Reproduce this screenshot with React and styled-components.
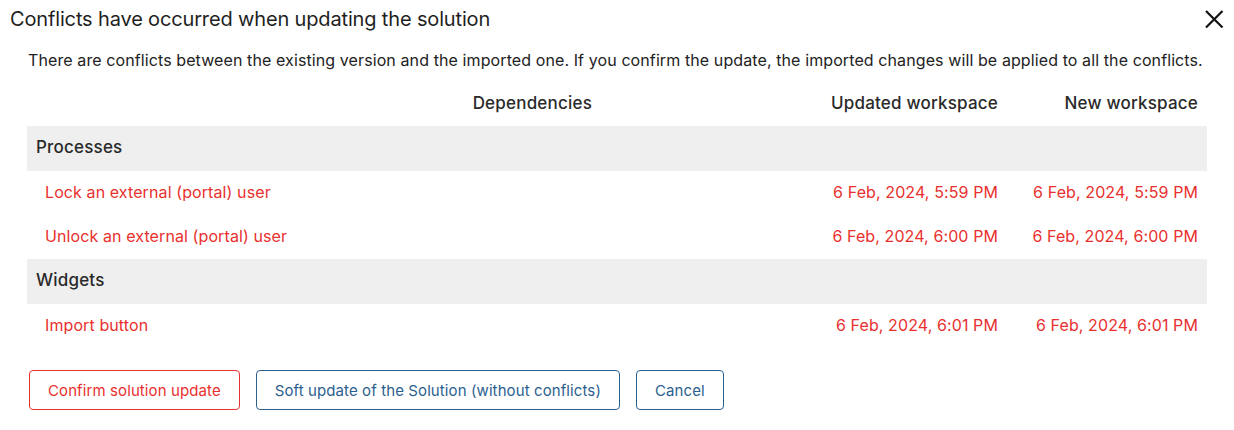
import React from 'react';
import styled, { createGlobalStyle } from 'styled-components';

const GlobalStyle = createGlobalStyle`
  body {
    margin: 0;
    background: #ffffff;
    font-family: 'Inter', 'Liberation Sans', sans-serif;
    color: #222222;
  }
`;

const Dialog = styled.div`
  width: 1234px;
  height: 430px;
  background: #fff;
`;

const Header = styled.div`
  height: 38px;
  display: flex;
  align-items: center;
  justify-content: space-between;
  padding: 0 10px;
`;

const Title = styled.div`
  font-size: 20px;
  font-weight: 400;
  color: #1f1f1f;
  letter-spacing: -0.15px;
`;

const CloseBtn = styled.button`
  border: none;
  background: none;
  padding: 0;
  width: 20px;
  height: 20px;
  display: flex;
  cursor: pointer;
`;

const Body = styled.div`
  padding: 10px 27px 0 27px;
`;

const Description = styled.p`
  margin: 0 0 8px 1px;
  font-size: 16px;
  line-height: 24px;
  letter-spacing: 0.1px;
  color: #222;
`;

const Table = styled.div`
  display: grid;
  grid-template-columns: 1fr 210px 200px;
`;

const HeadCell = styled.div`
  height: 46px;
  display: flex;
  align-items: center;
  justify-content: flex-end;
  padding-right: ${p => p.$pr || 9}px;
  font-size: 17px;
  font-weight: 500;
  letter-spacing: 0.2px;
  color: #2a2a2a;
`;

const Section = styled.div`
  grid-column: 1 / -1;
  height: 45px;
  box-sizing: border-box;
  display: flex;
  align-items: center;
  padding: 0 0 3px 9px;
  background: #efefef;
  font-size: 17px;
  font-weight: 500;
  letter-spacing: 0.2px;
  color: #2a2a2a;
`;

const Cell = styled.div`
  height: 44px;
  box-sizing: border-box;
  display: flex;
  align-items: center;
  justify-content: ${p => (p.$right ? 'flex-end' : 'flex-start')};
  padding: ${p => (p.$right ? '0 9px 3px 0' : '0 0 3px 18px')};
  font-size: 16px;
  letter-spacing: 0.1px;
  color: #e8302e;
  white-space: nowrap;
`;

const Actions = styled.div`
  display: flex;
  gap: 16px;
  margin-top: 22px;
  padding-left: 2px;
`;

const Button = styled.button`
  height: 40px;
  padding: 0 18px;
  border-radius: 4px;
  background: #fff;
  font-family: inherit;
  font-size: 15px;
  letter-spacing: 0.1px;
  border: 1px solid ${p => (p.$danger ? '#e8302e' : '#2c5f8f')};
  color: ${p => (p.$danger ? '#e8302e' : '#2c5f8f')};
  cursor: pointer;
`;

const groups = [
  {
    name: 'Processes',
    items: [
      ['Lock an external (portal) user', '6 Feb, 2024, 5:59 PM', '6 Feb, 2024, 5:59 PM'],
      ['Unlock an external (portal) user', '6 Feb, 2024, 6:00 PM', '6 Feb, 2024, 6:00 PM'],
    ],
  },
  {
    name: 'Widgets',
    items: [['Import button', '6 Feb, 2024, 6:01 PM', '6 Feb, 2024, 6:01 PM']],
  },
];

export default function App() {
  return (
    <Dialog>
      <GlobalStyle />
      <Header>
        <Title>Conflicts have occurred when updating the solution</Title>
        <CloseBtn aria-label="Close">
          <svg width="20" height="20" viewBox="0 0 20 20">
            <path d="M2 2 L18.5 18.5 M18.5 2 L2 18.5" stroke="#111" strokeWidth="2.2" fill="none" />
          </svg>
        </CloseBtn>
      </Header>
      <Body>
        <Description>
          There are conflicts between the existing version and the imported one. If you confirm the update, the imported changes will be applied to all the conflicts.
        </Description>
        <Table>
          <HeadCell $pr={205}>Dependencies</HeadCell>
          <HeadCell>Updated workspace</HeadCell>
          <HeadCell>New workspace</HeadCell>
          {groups.map(g => (
            <React.Fragment key={g.name}>
              <Section>{g.name}</Section>
              {g.items.map(([name, upd, neu]) => (
                <React.Fragment key={name}>
                  <Cell>{name}</Cell>
                  <Cell $right>{upd}</Cell>
                  <Cell $right>{neu}</Cell>
                </React.Fragment>
              ))}
            </React.Fragment>
          ))}
        </Table>
        <Actions>
          <Button $danger>Confirm solution update</Button>
          <Button>Soft update of the Solution (without conflicts)</Button>
          <Button>Cancel</Button>
        </Actions>
      </Body>
    </Dialog>
  );
}
